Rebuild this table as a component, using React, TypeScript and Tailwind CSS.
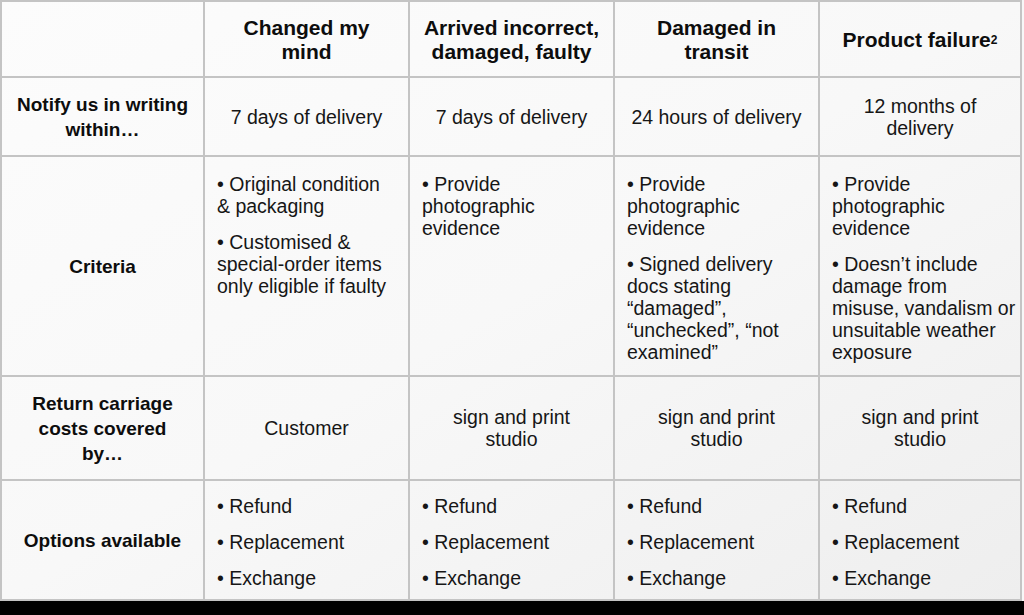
import React from "react";

const font = { fontFamily: '"Liberation Sans", Arial, sans-serif' };

const headers = [
  ["Changed my", "mind"],
  ["Arrived incorrect,", "damaged, faulty"],
  ["Damaged in", "transit"],
];

const Lines = ({ lines }: { lines: string[] }) => (
  <>
    {lines.map((l, i) => (
      <span key={i} className="block whitespace-nowrap">
        {l}
      </span>
    ))}
  </>
);

const cell = "border-r-2 border-b-2 border-[#c4c4c4]";
const headCell = `${cell} flex flex-col items-center justify-center pt-[2px] text-center font-bold text-[21px] leading-[24px] text-[#0d0d0d]`;
const labelCell = `${cell} flex flex-col items-center justify-center text-center font-bold text-[19px] leading-[25px] text-[#0d0d0d]`;
const centerCell = `${cell} flex flex-col items-center justify-center text-center text-[19.5px] leading-[22px] text-[#161616]`;
const listCell = `${cell} flex flex-col gap-[14px] pl-3 pt-[16px] text-[19.5px] leading-[22px] text-[#161616]`;
const optionCell = `${cell} flex flex-col justify-center gap-[14px] pl-3 pt-[4px] text-[19.5px] leading-[22px] text-[#161616]`;

const criteria: string[][][] = [
  [
    ["• Original condition", "& packaging"],
    ["• Customised &", "special-order items", "only eligible if faulty"],
  ],
  [["• Provide", "photographic", "evidence"]],
  [
    ["• Provide", "photographic", "evidence"],
    ["• Signed delivery", "docs stating", "\u201cdamaged\u201d,", "\u201cunchecked\u201d, \u201cnot", "examined\u201d"],
  ],
  [
    ["• Provide", "photographic", "evidence"],
    ["• Doesn\u2019t include", "damage from", "misuse, vandalism or", "unsuitable weather", "exposure"],
  ],
];

const App = () => {
  return (
    <div className="w-[1024px] h-[615px] bg-black flex flex-col" style={font}>
      <div className="h-[601px] bg-[#f7f7f7] flex">
        <div className="w-[1022px] h-[601px] grid grid-cols-[203px_205px_205px_205px_202px] grid-rows-[76px_79px_220px_104px_120px] border-l-2 border-t-2 border-[#c4c4c4] bg-linear-to-br from-[#fcfcfc] via-[#f8f8f8] to-[#eeeeee]">
          {/* header row */}
          <div className={cell} />
          {headers.map((h, i) => (
            <div key={i} className={headCell}>
              <Lines lines={h} />
            </div>
          ))}
          <div className={headCell}>
            <span className="whitespace-nowrap">
              Product failure<sup className="text-[12px] relative -top-[3px]">2</sup>
            </span>
          </div>

          {/* notify */}
          <div className={labelCell}>
            <Lines lines={["Notify us in writing", "within…"]} />
          </div>
          <div className={centerCell}>7 days of delivery</div>
          <div className={centerCell}>7 days of delivery</div>
          <div className={centerCell}>24 hours of delivery</div>
          <div className={centerCell}>
            <Lines lines={["12 months of", "delivery"]} />
          </div>

          {/* criteria */}
          <div className={labelCell}>Criteria</div>
          {criteria.map((col, i) => (
            <div key={i} className={listCell}>
              {col.map((p, j) => (
                <div key={j}>
                  <Lines lines={p} />
                </div>
              ))}
            </div>
          ))}

          {/* return carriage */}
          <div className={labelCell}>
            <Lines lines={["Return carriage", "costs covered", "by…"]} />
          </div>
          <div className={centerCell}>Customer</div>
          {[0, 1, 2].map((i) => (
            <div key={i} className={centerCell}>
              <Lines lines={["sign and print", "studio"]} />
            </div>
          ))}

          {/* options */}
          <div className={labelCell}>Options available</div>
          {[0, 1, 2, 3].map((i) => (
            <div key={i} className={optionCell}>
              <div>• Refund</div>
              <div>• Replacement</div>
              <div>• Exchange</div>
            </div>
          ))}
        </div>
      </div>
      <div className="h-[14px] bg-black" />
    </div>
  );
};

export default App;
